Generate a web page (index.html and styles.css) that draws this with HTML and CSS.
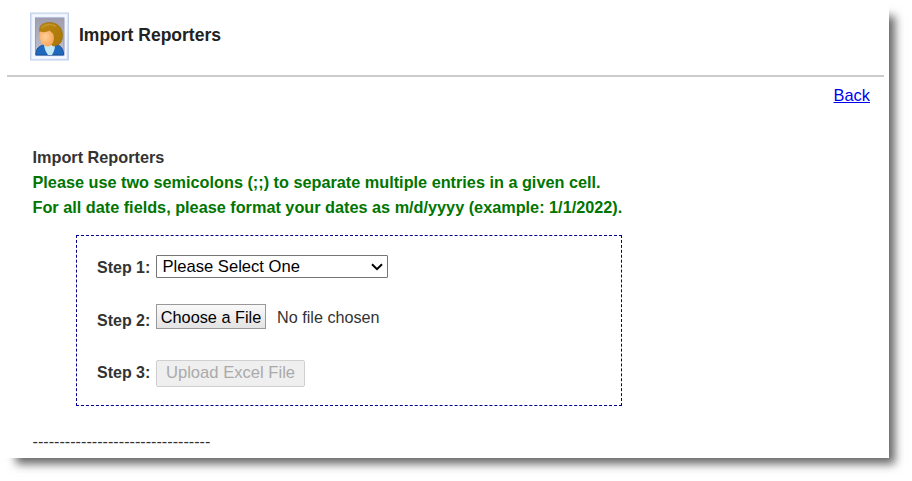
FILE: index.html
```html
<!DOCTYPE html>
<html lang="en">
<head>
    <meta charset="UTF-8">
    <meta name="viewport" content="width=device-width, initial-scale=1.0">
    <title>Import Reporters</title>
    <link rel="stylesheet" href="styles.css">
</head>
<body>

    <div class="page">
        <div class="header">
            <svg class="header-icon" width="40" height="50" viewBox="0 0 40 50">
                <defs>
                    <linearGradient id="frame" x1="0" y1="0" x2="1" y2="1">
                        <stop offset="0" stop-color="#d6e2f6"/>
                        <stop offset="0.6" stop-color="#d9e8fb"/>
                        <stop offset="1" stop-color="#c3d4f2"/>
                    </linearGradient>
                    <linearGradient id="backdrop" x1="0" y1="0" x2="0" y2="1">
                        <stop offset="0" stop-color="#a09eae"/>
                        <stop offset="1" stop-color="#c2c1d0"/>
                    </linearGradient>
                    <radialGradient id="face" cx="0.4" cy="0.4" r="0.7">
                        <stop offset="0" stop-color="#ffcf98"/>
                        <stop offset="1" stop-color="#f6a254"/>
                    </radialGradient>
                    <linearGradient id="hair" x1="0" y1="0" x2="1" y2="1">
                        <stop offset="0" stop-color="#b98712"/>
                        <stop offset="1" stop-color="#aa7606"/>
                    </linearGradient>
                </defs>
                <rect x="1.5" y="1" width="38" height="47" fill="url(#frame)" stroke="#c3d0ec"/>
                <rect x="4.5" y="3.5" width="32" height="42" fill="none" stroke="#f5f9ff" stroke-width="2.5"/>
                <rect x="6.5" y="6" width="28.5" height="37" fill="url(#backdrop)" stroke="#9a9bb8"/>
                <path d="M7 43C7 36 10 34 15 33L27 32.5C32 33.5 34.5 37 34.5 43Z" fill="#2068bb" stroke="#1450a0"/>
                <path d="M15 33L26 33C26 38 24 41 23 43L19 43C17 40 15.5 37 15 33Z" fill="#c5e8f5"/>
                <path d="M11 20C9.5 14 13 11 20 10.5C28 10.5 33 15 33.5 22C34 29 31 34 24 34Z" fill="url(#hair)" stroke="#94690f" stroke-width="0.6"/>
                <path d="M11 19.5C15 21 19 19.5 21 18.5C21 20 24 20.5 24.5 23C26 29 23 34.5 18.5 34.5C12.5 34 9.5 27 11 19.5Z" fill="url(#face)"/>
                <path d="M13 15.5C17 12 22 12 26 14" fill="none" stroke="#c4982a" stroke-width="1.5" stroke-linecap="round"/>
            </svg>
            <h1>Import Reporters</h1>
        </div>

        <div class="nav">
            <a href="#">Back</a>
        </div>

        <div class="content">
            <div class="intro">Import Reporters</div>
            <div class="intro note">Please use two semicolons (;;) to separate multiple entries in a given cell.</div>
            <div class="intro note">For all date fields, please format your dates as m/d/yyyy (example: 1/1/2022).</div>

            <form class="steps">
                <div class="step step-select">
                    <label for="importType">Step 1:</label>
                    <div class="select-box">
                        <select id="importType">
                            <option>Please Select One</option>
                        </select>
                        <svg class="arrow" width="12" height="8" viewBox="0 0 12 8">
                            <path d="M1 1.2L6 6.2L11 1.2" fill="none" stroke="#000" stroke-width="2"/>
                        </svg>
                    </div>
                </div>
                <div class="step step-file">
                    <label>Step 2:</label>
                    <button type="button" class="choose-button">Choose a File</button>
                    <span class="file-name">No file chosen</span>
                </div>
                <div class="step step-upload">
                    <label>Step 3:</label>
                    <button type="button" class="upload-button" disabled>Upload Excel File</button>
                </div>
            </form>

            <div class="divider">---------------------------------</div>
        </div>
    </div>

</body>
</html>
```

FILE: styles.css
```css
body {
    margin: 0;
    min-height: 481px;
    background-color: #fff;
    color: #333;
    font-family: "Liberation Sans", Arial, sans-serif;
    font-size: 16.2px;
}
.page {
    box-sizing: border-box;
    width: 889px;
    height: 458px;
    padding: 0 5px 0 7px;
    background-color: #fff;
    box-shadow: 11px 11px 9px -5px rgba(0, 0, 0, 0.6);
}
.header {
    display: flex;
    align-items: flex-start;
    box-sizing: border-box;
    height: 77px;
    padding: 12px 0 0 22px;
    border-bottom: 2px solid #ccc;
}
.header-icon {
    display: block;
}
h1 {
    margin: 13px 0 0 10px;
    color: #222;
    font-size: 17.5px;
    line-height: 20px;
}
.nav {
    padding: 8px 14px 0 0;
    text-align: right;
    line-height: 20px;
}
.nav a {
    color: #00e;
    font-size: 16.4px;
}
.content {
    padding: 40px 0 0 25.5px;
}
.intro {
    font-weight: bold;
    font-size: 16.25px;
    line-height: 25px;
}
.note {
    color: #007500;
}
.steps {
    box-sizing: border-box;
    width: 546px;
    height: 171px;
    margin: 15px 0 0 43.5px;
    padding: 19px 0 0 20px;
    border: 1px dashed #00008b;
}
.step {
    display: flex;
    align-items: flex-start;
}
.step label {
    width: 59px;
    font-weight: bold;
    font-size: 16px;
    line-height: 20px;
}
.step-select {
    height: 49px;
}
.step-select label {
    margin-top: 3px;
}
.step-file {
    height: 56px;
}
.step-file label {
    margin-top: 7px;
}
.step-upload label {
    margin-top: 3px;
}
.select-box {
    display: grid;
    align-items: center;
    width: 232px;
    height: 23px;
}
.select-box select,
.select-box .arrow {
    grid-area: 1 / 1;
}
.select-box .arrow {
    justify-self: end;
    margin-right: 5px;
    pointer-events: none;
}
select {
    appearance: none;
    width: 232px;
    height: 23px;
    padding: 0 5.5px;
    border: 1px solid #767676;
    border-radius: 1px;
    background-color: #fff;
    color: #000;
    font-family: inherit;
    font-size: 16.6px;
}
button {
    box-sizing: border-box;
    padding: 0;
    font-family: inherit;
    font-size: 16.6px;
    white-space: nowrap;
}
.choose-button {
    width: 110px;
    height: 25px;
    padding-top: 1px;
    border: 1px solid #999;
    background: linear-gradient(#f9f9f9, #e3e3e3);
    color: #000;
    font-size: 16.3px;
}
.file-name {
    margin: 3px 0 0 11px;
    line-height: 20px;
}
.upload-button {
    width: 149px;
    height: 27px;
    padding-bottom: 2px;
    border: 1px solid #d0d0d0;
    border-radius: 2px;
    background-color: #efefef;
    color: #aaa;
}
.divider {
    margin-top: 25px;
    line-height: 20px;
}
```
